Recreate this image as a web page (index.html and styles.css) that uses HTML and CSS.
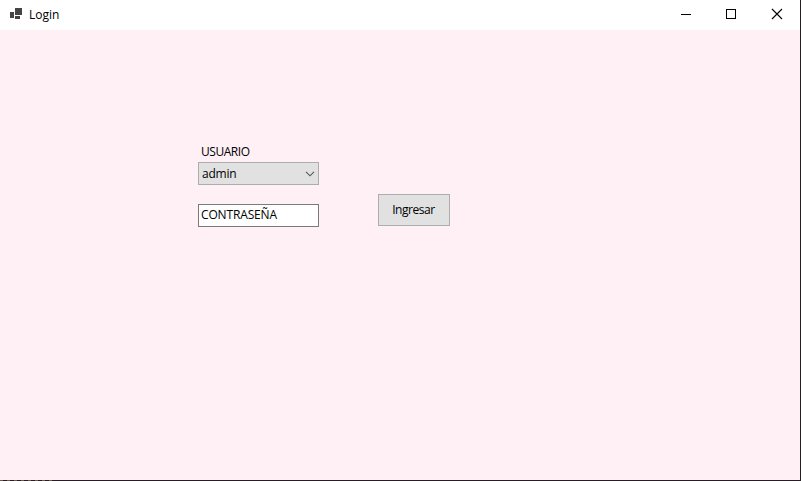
FILE: index.html
```html
<!DOCTYPE html>
<html lang="es">
<head>
<meta charset="utf-8">
<title>Login</title>
<link rel="stylesheet" href="styles.css">
</head>
<body>
<div class="window">
  <header class="titlebar">
    <svg class="app-icon" width="12" height="12" viewBox="0 0 12 12" shape-rendering="crispEdges"><path fill="#444" d="M5 0h7v7H5zM0 4h4v6H0zM5 8h5v3H5z"/></svg>
    <h1 class="title">Login</h1>
    <div class="controls">
      <svg width="46" height="30" viewBox="0 0 46 30" shape-rendering="crispEdges"><path d="M19 14.5h10" stroke="#000"/></svg>
      <svg width="46" height="30" viewBox="0 0 46 30" shape-rendering="crispEdges"><path d="M18.5 9.5h9v9h-9z" stroke="#000" fill="none"/></svg>
      <svg width="46" height="30" viewBox="0 0 46 30"><path d="M18 9l10 10M28 9L18 19" stroke="#000" stroke-width="1.1"/></svg>
    </div>
  </header>
  <main class="client">
    <form class="login">
      <div class="fields">
        <label class="label"><span class="t-label">USUARIO</span></label>
        <div class="combo"><span class="t-admin">admin</span>
          <svg width="10" height="6" viewBox="0 0 10 6"><path d="M1 .8l4 4 4-4" fill="none" stroke="#555" stroke-width="1.1"/></svg>
        </div>
        <div class="textbox"><span class="t-pass">CONTRASEÑA</span></div>
      </div>
      <button class="button" type="button"><span class="t-button">Ingresar</span></button>
    </form>
  </main>
  <div class="edge"></div>
</div>
</body>
</html>
```
FILE: styles.css
```css
* { box-sizing: border-box; }
body {
  margin: 0;
  overflow: hidden;
  font: 12px/16px "Open Sans", "Noto Sans", sans-serif;
  color: #000;
}
.window {
  display: flex;
  flex-direction: column;
  width: 801px;
  height: 481px;
  border-right: 1px solid #231f20;
  background: #fff0f5;
}
.titlebar {
  display: flex;
  flex: 0 0 30px;
  align-items: center;
  padding-left: 10px;
  background: #fff;
}
.app-icon { margin-top: -2px; }
.title { margin: 0 0 0 7px; font-size: 12px; font-weight: 400; letter-spacing: 0; }
.controls { display: flex; margin-left: auto; }
.controls svg { display: block; }
.client { flex: 1; padding: 114px 0 0 198px; }
.edge {
  flex: 0 0 1px;
  background: repeating-linear-gradient(90deg, #6a5a4c 0 3px, #2a1c24 3px 7px) 0 0 / 52px 1px no-repeat #2a1c24;
}
.login { display: flex; align-items: flex-start; gap: 59px; }
.fields { width: 121px; }
.label { display: block; height: 18px; padding-left: 3px; }
.combo {
  display: flex;
  align-items: center;
  justify-content: space-between;
  height: 23px;
  padding: 0 3px;
  border: 1px solid #adadad;
  background: #e1e1e1;
}
.textbox {
  height: 23px;
  margin-top: 19px;
  padding: 2px;
  border: 1px solid #7a7a7a;
  background: #fff;
}
.button {
  width: 72px;
  height: 32px;
  margin-top: 50px;
  padding: 0 1px 0 0;
  border: 1px solid #adadad;
  background: #e1e1e1;
  color: #000;
  font: inherit;
}
.t-label { letter-spacing: -0.45px; }
.t-admin { letter-spacing: -0.2px; }
.t-pass { letter-spacing: -0.15px; }
.t-button { letter-spacing: -0.45px; }
```
